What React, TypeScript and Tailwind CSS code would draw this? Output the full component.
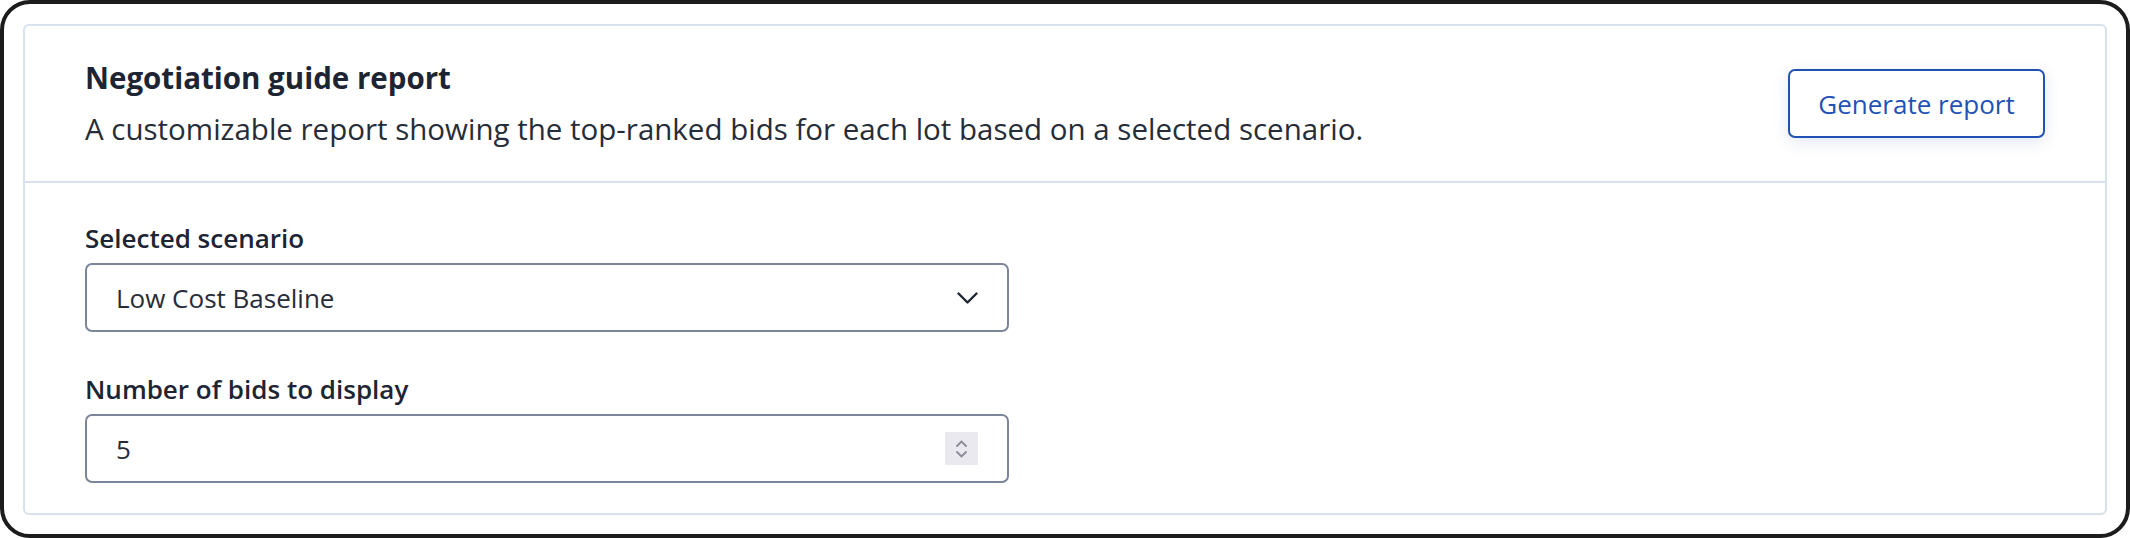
import { useState } from "react";

const FONT = "font-['Open_Sans','Noto_Sans',sans-serif]";

const Chevron = () => (
	<svg width="21" height="12" viewBox="0 0 21 12" fill="none">
		<path
			d="M1.5 1.5 L10.5 10.5 L19.5 1.5"
			stroke="#1f2633"
			strokeWidth="2.4"
			strokeLinecap="round"
			strokeLinejoin="round"
		/>
	</svg>
);

const Spinner = () => (
	<div className="flex h-[33px] w-[33px] flex-col items-center justify-center gap-[4px] bg-[#e9e9ef]">
		<svg width="11" height="7" viewBox="0 0 11 7" fill="none">
			<path d="M1 6 L5.5 1.5 L10 6" stroke="#8a8a99" strokeWidth="1.8" strokeLinecap="round" />
		</svg>
		<svg width="11" height="7" viewBox="0 0 11 7" fill="none">
			<path d="M1 1 L5.5 5.5 L10 1" stroke="#8a8a99" strokeWidth="1.8" strokeLinecap="round" />
		</svg>
	</div>
);

const App = () => {
	const [scenario] = useState("Low Cost Baseline");
	const [bids] = useState(5);

	return (
		<div className={`h-[538px] w-[2130px] bg-white ${FONT}`}>
			<div className="box-border h-[538px] w-full rounded-[30px] border-4 border-[#1c1c1c] px-[19px] pt-[20px]">
				<div className="rounded-[6px] border-2 border-[#d8e1ee] bg-white">
					{/* header */}
					<div className="flex items-center justify-between px-[60px] py-[36px]">
						<div>
							<h2 className="text-[29.5px] font-bold leading-[32px] text-[#1d2433]">
								Negotiation guide report
							</h2>
							<p className="mt-[19px] text-[29.5px] leading-[32px] text-[#272d38]">
								A customizable report showing the top-ranked bids for each lot based on a selected scenario.
							</p>
						</div>
						<button className="box-border flex h-[69px] w-[257px] items-center justify-center rounded-[7px] border-2 border-[#1f52b4] bg-white text-[26px] leading-[32px] text-[#1f52b4] shadow-[0_4px_16px_rgba(40,70,140,0.13)]">
							Generate report
						</button>
					</div>

					<div className="h-[2px] bg-[#d8e1ee]" />

					{/* body */}
					<div className="flex flex-col gap-[41px] px-[60px] pb-[30px] pt-[39px]">
						<div className="flex flex-col gap-[9px]">
							<label className="text-[26px] font-semibold leading-[32px] text-[#1d2433]">
								Selected scenario
							</label>
							<div className="box-border flex h-[69px] w-[924px] items-center justify-between rounded-[7px] border-2 border-[#7b869b] pl-[29px] pr-[29px]">
								<span className="text-[26px] leading-[32px] text-[#272d38]">{scenario}</span>
								<Chevron />
							</div>
						</div>
						<div className="flex flex-col gap-[9px]">
							<label className="text-[26px] font-semibold leading-[32px] text-[#1d2433]">
								Number of bids to display
							</label>
							<div className="box-border flex h-[69px] w-[924px] items-center justify-between rounded-[7px] border-2 border-[#7b869b] pl-[29px] pr-[29px]">
								<span className="text-[26px] leading-[32px] text-[#272d38]">{bids}</span>
								<Spinner />
							</div>
						</div>
					</div>
				</div>
			</div>
		</div>
	);
};

export default App;
